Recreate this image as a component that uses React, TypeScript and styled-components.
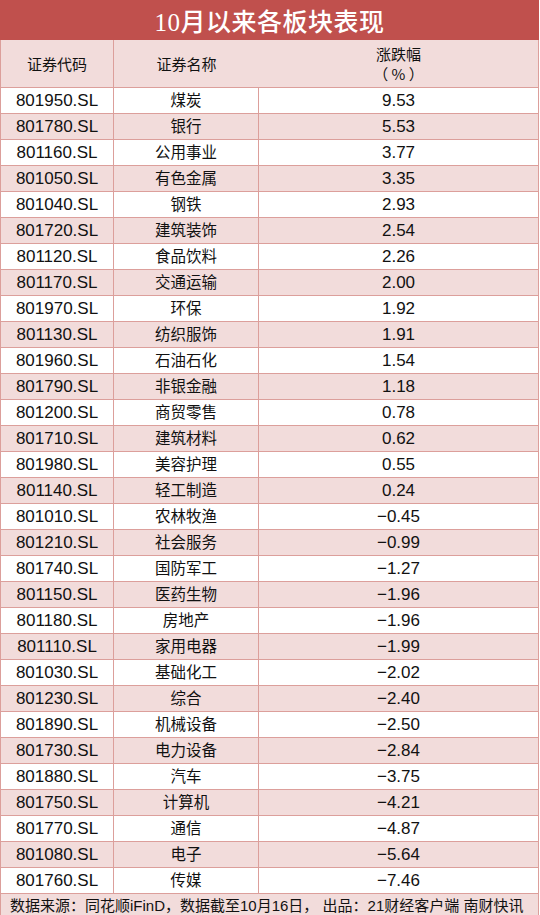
import styled, { createGlobalStyle } from "styled-components";

const GlobalStyle = createGlobalStyle`
  html, body {
    margin: 0;
    padding: 0;
    background: #ffffff;
  }
`;

const LINE = "#dc9f9b";
const PINK = "#f2dcdb";

const rows: [string, string, string][] = [
  ["801950.SL", "煤炭", "9.53"],
  ["801780.SL", "银行", "5.53"],
  ["801160.SL", "公用事业", "3.77"],
  ["801050.SL", "有色金属", "3.35"],
  ["801040.SL", "钢铁", "2.93"],
  ["801720.SL", "建筑装饰", "2.54"],
  ["801120.SL", "食品饮料", "2.26"],
  ["801170.SL", "交通运输", "2.00"],
  ["801970.SL", "环保", "1.92"],
  ["801130.SL", "纺织服饰", "1.91"],
  ["801960.SL", "石油石化", "1.54"],
  ["801790.SL", "非银金融", "1.18"],
  ["801200.SL", "商贸零售", "0.78"],
  ["801710.SL", "建筑材料", "0.62"],
  ["801980.SL", "美容护理", "0.55"],
  ["801140.SL", "轻工制造", "0.24"],
  ["801010.SL", "农林牧渔", "−0.45"],
  ["801210.SL", "社会服务", "−0.99"],
  ["801740.SL", "国防军工", "−1.27"],
  ["801150.SL", "医药生物", "−1.96"],
  ["801180.SL", "房地产", "−1.96"],
  ["801110.SL", "家用电器", "−1.99"],
  ["801030.SL", "基础化工", "−2.02"],
  ["801230.SL", "综合", "−2.40"],
  ["801890.SL", "机械设备", "−2.50"],
  ["801730.SL", "电力设备", "−2.84"],
  ["801880.SL", "汽车", "−3.75"],
  ["801750.SL", "计算机", "−4.21"],
  ["801770.SL", "通信", "−4.87"],
  ["801080.SL", "电子", "−5.64"],
  ["801760.SL", "传媒", "−7.46"],
];

const Page = styled.div`
  width: 539px;
  font-family: "Liberation Sans", "Noto Sans CJK SC", sans-serif;
  color: #111;
`;

const Title = styled.div`
  height: 40px;
  background: #c0504d;
  color: #fff;
  display: flex;
  align-items: center;
  justify-content: center;
  font-family: "Liberation Serif", "Noto Sans CJK SC", serif;
  font-size: 25px;
  font-weight: 500;
  letter-spacing: 0.5px;
`;

const Table = styled.div`
  border-left: 1px solid ${LINE};
  border-right: 1px solid ${LINE};
`;

const Row = styled.div<{ $shade?: boolean; $height: number }>`
  display: grid;
  grid-template-columns: 113px 145px 1fr;
  height: ${(p) => p.$height}px;
  box-sizing: border-box;
  border-bottom: 1px solid ${LINE};
  background: ${(p) => (p.$shade ? PINK : "#fff")};
`;

const Cell = styled.div<{ $kind: "code" | "name" | "num"; $last?: boolean; $noLine?: boolean }>`
  display: flex;
  flex-direction: column;
  align-items: center;
  justify-content: center;
  border-right: ${(p) => (p.$last || p.$noLine ? "none" : `1px solid ${LINE}`)};
  font-size: ${(p) => (p.$kind === "name" ? "15.5px" : "17px")};
  line-height: 1;
  white-space: nowrap;
`;

const HeadText = styled.span`
  font-family: "Noto Sans CJK SC", sans-serif;
  font-size: 15px;
  line-height: 20px;
`;

const Footer = styled.div`
  height: 21px;
  box-sizing: border-box;
  background: ${PINK};
  border-left: 1px solid ${LINE};
  border-right: 1px solid ${LINE};
  display: flex;
  align-items: center;
  padding-left: 9px;
  font-size: 15px;
  white-space: nowrap;
`;

export default function App() {
  return (
    <Page>
      <GlobalStyle />
      <Title>10月以来各板块表现</Title>
      <Table>
        <Row $shade $height={48}>
          <Cell $kind="name">
            <HeadText>证券代码</HeadText>
          </Cell>
          <Cell $kind="name" $noLine>
            <HeadText>证券名称</HeadText>
          </Cell>
          <Cell $kind="name" $last>
            <HeadText>涨跌幅</HeadText>
            <HeadText>（ % ）</HeadText>
          </Cell>
        </Row>
        {rows.map(([code, name, value], i) => (
          <Row key={code} $shade={i % 2 === 1} $height={26}>
            <Cell $kind="code">{code}</Cell>
            <Cell $kind="name">{name}</Cell>
            <Cell $kind="num" $last>
              {value}
            </Cell>
          </Row>
        ))}
      </Table>
      <Footer>数据来源：同花顺iFinD，数据截至10月16日， 出品：21财经客户端 南财快讯</Footer>
    </Page>
  );
}
